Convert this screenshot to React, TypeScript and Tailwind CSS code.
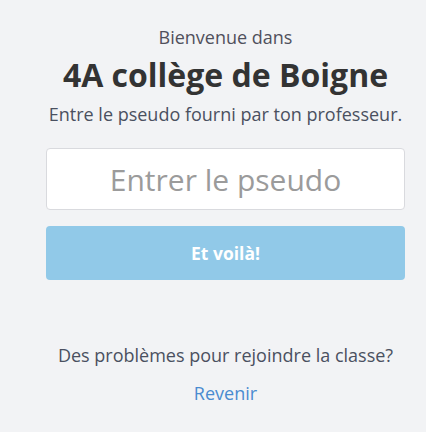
import React from 'react';

const App: React.FC = () => {
  return (
    <div
      className="min-h-[432px] w-[426px] bg-[#f2f3f5] pt-[24px]"
      style={{ fontFamily: '"Open Sans", "Noto Sans", sans-serif' }}
    >
      <div className="ml-[46px] w-[359px] text-center">
        <p className="text-[18px] leading-[26px] text-[#50505c]">Bienvenue dans</p>
        <h1 className="mt-[5px] text-[32px] font-bold leading-[40px] text-[#333333]">
          4A collège de Boigne
        </h1>
        <p className="mt-[6px] text-[18px] leading-[26px] text-[#4a5060]">
          Entre le pseudo fourni par ton professeur.
        </p>
        <input
          type="text"
          placeholder="Entrer le pseudo"
          className="mt-[21px] h-[62px] w-full rounded-[4px] border border-[#d9dade] bg-white text-center text-[30px] text-[#333] outline-none placeholder:text-[#9b9b9b]"
        />
        <button className="mt-[16px] h-[54px] w-full rounded-[4px] bg-[#91c9e8] text-[17.5px] font-bold text-white">
          Et voilà!
        </button>
        <p className="mt-[62px] text-[18px] leading-[26px] text-[#4a5060]">
          Des problèmes pour rejoindre la classe?
        </p>
        <p className="mt-[12px] text-[18px] leading-[26px] text-[#4a8bd0]">Revenir</p>
      </div>
    </div>
  );
};

export default App;
